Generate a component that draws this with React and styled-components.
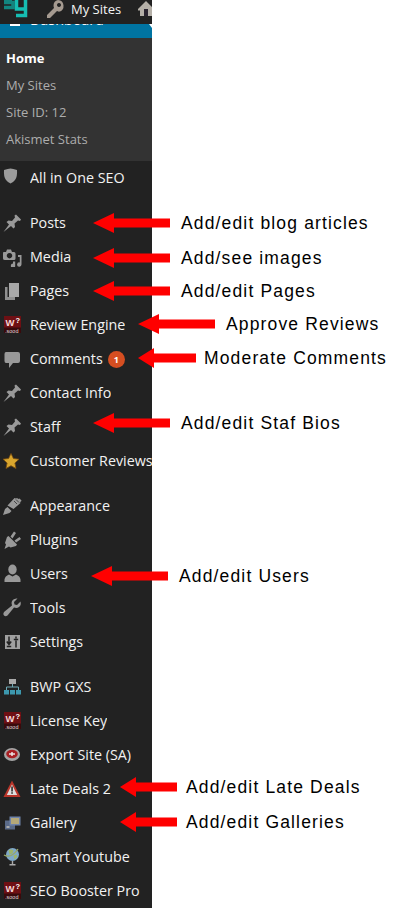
import React from "react";
import styled, { createGlobalStyle } from "styled-components";

const GlobalStyle = createGlobalStyle`
  html, body {
    margin: 0;
    padding: 0;
    background: #fff;
  }
`;

const Page = styled.div`
  width: 400px;
  height: 908px;
  overflow: hidden;
  background: #fff;
`;

const Sidebar = styled.aside`
  width: 152px;
  background: #222;
  font-family: "Open Sans", "Liberation Sans", sans-serif;
  font-size: 14.3px;
  color: #f2f2f2;
`;

/* top admin bar, cut off by the crop */
const TopBar = styled.header`
  position: relative;
  z-index: 1;
  display: flex;
  align-items: flex-start;
  width: 152px;
  height: 24px;
  overflow: hidden;
  background: #222;
`;

const Logo = styled.svg`
  flex: none;
  margin-left: 4px;
`;

const KeyIcon = styled.svg`
  flex: none;
  margin-left: 18px;
`;

const TopLabel = styled.span`
  flex: none;
  margin-left: 7px;
  font-size: 13px;
  line-height: 18px;
  color: #f4f4f4;
`;

const HomeIcon = styled.svg`
  flex: none;
  margin-left: 17px;
`;

/* current menu item, most of it hidden under the top bar */
const CurrentItem = styled.div`
  position: relative;
  display: flex;
  align-items: flex-start;
  height: 14px;
  overflow: hidden;
  background: #0074a2;
  color: #fff;
`;

const CurrentInner = styled.div`
  display: flex;
  align-items: center;
  flex: none;
  gap: 10px;
  width: 152px;
  height: 34px;
  margin-top: -22px;
  padding-left: 10px;
  box-sizing: border-box;
`;

const CurrentGlyph = styled.span`
  flex: none;
  width: 10px;
  height: 14px;
  background: #fff;
`;

const CurrentNotch = styled.span`
  position: absolute;
  top: 0;
  right: 0;
  width: 0;
  height: 0;
  border-top: 4px solid #fff;
  border-left: 3px solid transparent;
`;

const SubMenu = styled.ul`
  margin: 0;
  padding: 7px 0 8px 6px;
  list-style: none;
  background: #333;
  font-size: 13px;
`;

const SubItem = styled.li`
  height: 27px;
  line-height: 27px;
  color: ${(p) => (p.$active ? "#fff" : "#adadad")};
  font-weight: ${(p) => (p.$active ? 700 : 400)};
`;

const Group = styled.ul`
  margin: 0 0 11px;
  padding: 0;
  list-style: none;
  &:last-child {
    margin-bottom: 0;
  }
`;

const Row = styled.li`
  position: relative;
  display: flex;
  align-items: center;
  width: 152px;
  height: 34px;
  padding-left: 2px;
  box-sizing: border-box;
`;

const IconBox = styled.svg`
  flex: none;
  width: 20px;
  height: 20px;
  margin-right: 8px;
`;

const Label = styled.span`
  min-width: 0;
  padding-bottom: 2px;
  overflow: hidden;
  white-space: nowrap;
`;

const Badge = styled.span`
  flex: none;
  width: 17px;
  height: 17px;
  margin-left: 5px;
  border-radius: 50%;
  background: #d54e21;
  color: #fff;
  font-size: 9px;
  font-weight: 700;
  line-height: 17px;
  text-align: center;
`;

/* red arrow + caption drawn over the screenshot */
const Note = styled.div`
  position: absolute;
  top: ${(p) => p.$dy}px;
  left: ${(p) => p.$tip}px;
  display: flex;
  align-items: center;
  height: 34px;
  white-space: nowrap;
`;

const NoteArrow = styled.svg`
  flex: none;
  display: block;
`;

const NoteText = styled.span`
  margin-left: ${(p) => p.$gap}px;
  font-family: "Liberation Sans", Arial, sans-serif;
  font-size: 17.5px;
  letter-spacing: 1.15px;
  color: #000;
`;

const grey = "#999";

const Pin = () => (
  <IconBox viewBox="0 0 20 20">
    <path fill={grey} d="M1.500 19 7 11.500 4.500 9 6.500 7.500 10 8 13 4.500 12.500 2.500 14 1.500 19 6.500 18 8 16 7.500 12.500 10.500 13 14 11.500 15.500 9 13Z" />
  </IconBox>
);

const Media = () => (
  <IconBox viewBox="0 0 20 20">
    <path fill={grey} fillRule="evenodd" d="M1.500 5H4l1-2.500h4L10 5h2q1.500 0 1.500 1.500v5q0 1.500-1.500 1.500H3q-2 0-2-1.500v-5Q1 5 1.500 5ZM7.500 6a2.700 2.700 0 1 0 .01 0Z" />
    <path fill={grey} d="M16 8h3.500v9.500a2.200 2.200 0 1 1-1.700-2.100V10H16ZM11 14.500h2.200v4a2.200 2.200 0 1 1-2.200-2Z" />
  </IconBox>
);

const Pages = () => (
  <IconBox viewBox="0 0 20 20">
    <path fill="#8f8f8f" d="M3 6h2.500v10H13v3H3Z" />
    <path fill="#a8a8a8" d="M7 2h10v14H7Z" />
  </IconBox>
);

const WpBox = () => (
  <IconBox viewBox="0 0 20 20">
    <rect x="2" y="1" width="17" height="17" fill="#6e1014" />
    <rect x="2" y="12.500" width="17" height="5.500" fill="#3a0a0c" />
    <text x="3.500" y="10.500" fontFamily="Liberation Sans, sans-serif" fontWeight="700" fontSize="9.500" fill="#f4d6d6">W</text>
    <text x="13.500" y="8" fontFamily="Liberation Sans, sans-serif" fontWeight="700" fontSize="7.500" fill="#fff">?</text>
    <text x="3" y="17.500" fontFamily="Liberation Sans, sans-serif" fontSize="5.500" fill="#ddd">.sood</text>
  </IconBox>
);

const Comment = () => (
  <IconBox viewBox="0 0 20 20">
    <path fill={grey} d="M4 3h12q2 0 2 2v7q0 2-2 2h-5l-4 5v-5H4q-1.500 0-1.500-2V5Q2.500 3 4 3Z" />
  </IconBox>
);

const Star = () => (
  <IconBox viewBox="0 0 20 20">
    <path fill="#d9a62e" stroke="#7a4e10" strokeWidth=".8" d="m9 2.500 2.400 5 5.600.700-4.100 3.800 1.100 5.500-5-2.800-5 2.800 1.100-5.500L1 8.200l5.600-.700Z" />
  </IconBox>
);

const Brush = () => (
  <IconBox viewBox="0 0 20 20">
    <path fill={grey} d="M1 19 3 13l2.500-2 4 4-2 2Z" />
    <path fill={grey} d="m5.500 9.500 7-7.500 1.500.500 1-.500 1.500 1 1-.500 2 2-.500 1-1 .500.500 1-7 6Z" />
    <path fill="none" stroke="#222" strokeWidth=".7" d="m12 5 3 3M14 3.500l3 3" />
  </IconBox>
);

const Plug = () => (
  <IconBox viewBox="0 0 20 20">
    <path fill={grey} d="M2.500 19 4 14.500 3 13l2-6 1.500-1L15 14.500l-1 1.500-5.500 1.500-1.500-1Z" />
    <path fill={grey} d="M8.500 6.500 12 1.500l2 1.500-3.500 5.500ZM12.500 10.500 17.500 7l1.500 2-5 3.500Z" />
  </IconBox>
);

const User = () => (
  <IconBox viewBox="0 0 20 20">
    <ellipse cx="10.500" cy="5.500" rx="4.200" ry="5" fill={grey} />
    <path fill={grey} d="M2.500 18v-2.500Q3 12 7 10.500l3.500 2 3.500-2q4 1.500 4.500 5V18Z" />
  </IconBox>
);

const Wrench = () => (
  <IconBox viewBox="0 0 20 20">
    <path fill={grey} d="M18.500 3.500 15 7l-2.500-.5L12 4l3.500-3.500Q11.500 0 10 3q-1 2 0 4.500L2 14q-1.500 2 0 3.500t3.500 0L12 9.500q3 1 5-.5 2.500-2 1.500-5.500Z" />
  </IconBox>
);

const Settings = () => (
  <IconBox viewBox="0 0 20 20">
    <rect x="3" y="3" width="15" height="14" fill="#a0a0a0" />
    <path fill="none" stroke="#222" strokeWidth="1.500" d="M7 4.500v7M4.800 9.500 7 12.500l2.200-3M14 15.500v-7M11.800 7.500h4.400M4.800 14.500h4.400M14 4.500v2" />
  </IconBox>
);

const Network = () => (
  <IconBox viewBox="0 0 20 20">
    <rect x="7" y="2" width="7" height="5" fill="#aaa" />
    <path fill="none" stroke="#6fa9b5" d="M10.500 7v3M4.500 13v-3h12v3" />
    <path fill="#3d98ae" d="M2 13h5v4.500H2ZM8 13h5v4.500H8ZM14 13h5v4.500h-5Z" />
  </IconBox>
);

const ExportDisc = () => (
  <IconBox viewBox="0 0 20 20">
    <ellipse cx="10" cy="9.500" rx="8" ry="6.500" fill="#a5a5a5" />
    <ellipse cx="10" cy="9" rx="5.800" ry="4.200" fill="#a82024" />
    <path fill="#eee" d="M7 8.300h6v1.400H7Z" />
    <path fill="#eee" d="M9.300 7h1.400v4H9.300Z" />
  </IconBox>
);

const Warning = () => (
  <IconBox viewBox="0 0 20 20">
    <path fill="#b8352a" d="M10 1.500 18.500 18h-17Z" />
    <path fill="#ddd" d="M10 5.500 15.200 16H4.800Z" />
    <path fill="#222" d="M9.300 7.500h1.500v5H9.300ZM9.300 13.200h1.500v1.600H9.300Z" />
  </IconBox>
);

const Gallery = () => (
  <IconBox viewBox="0 0 20 20">
    <rect x="3" y="7.500" width="10" height="9" fill="#5a6a88" />
    <rect x="7.500" y="3.500" width="11" height="9" fill="#6f83aa" />
    <rect x="9" y="5" width="8" height="6" fill="#b5a878" />
    <rect x="4.500" y="13" width="3" height="2" fill="#aaa" />
  </IconBox>
);

const Globe = () => (
  <IconBox viewBox="0 0 20 20">
    <circle cx="10.500" cy="7.500" r="6.500" fill="#7fa9c9" />
    <path fill="#9db46a" d="M6.500 3.500q3-2 5 0l-1 3-3 1Zm5 5 3-1 1 2-3 3Z" />
    <path fill="none" stroke="#9aa860" strokeWidth="1.300" d="M2 8q7 4 14-6" />
    <path fill="#aaa" d="M9.800 14h1.400v3H9.800ZM7.500 17h6v1.500h-6Z" />
  </IconBox>
);

const Shield = () => (
  <IconBox viewBox="0 0 20 20">
    <path fill="#9c9c9c" d="M2 2q4-1.500 6.500-1.500T15 2q.5 7-2 10-2 2.500-4.500 3.500Q6 14.500 4 12 1.500 9 2 2Z" />
  </IconBox>
);

const Arrow = ({ width, head, band = 9 }) => (
  <NoteArrow width={width} height="20" viewBox={`0 0 ${width} 20`}>
    <polygon
      fill="#ff0000"
      points={`0,10 ${head},0 ${head},${10 - band / 2} ${width},${10 - band / 2} ${width},${10 + band / 2} ${head},${10 + band / 2} ${head},20`}
    />
  </NoteArrow>
);

const MenuRow = ({ icon: Icon, label, badge, note }) => (
  <Row>
    <Icon />
    <Label>{label}</Label>
    {badge && <Badge>{badge}</Badge>}
    {note && (
      <Note $tip={note.tip} $dy={note.dy}>
        <Arrow width={note.end - note.tip} head={note.head} />
        <NoteText $gap={note.text - note.end}>{note.caption}</NoteText>
      </Note>
    )}
  </Row>
);

const groups = [
  [{ icon: Shield, label: "All in One SEO" }],
  [
    { icon: Pin, label: "Posts", note: { tip: 93, end: 170, head: 21, text: 181, dy: 0, caption: "Add/edit blog articles" } },
    { icon: Media, label: "Media", note: { tip: 93, end: 170, head: 21, text: 181, dy: 1, caption: "Add/see images" } },
    { icon: Pages, label: "Pages", note: { tip: 93, end: 170, head: 21, text: 181, dy: 0, caption: "Add/edit Pages" } },
    { icon: WpBox, label: "Review Engine", note: { tip: 138, end: 215, head: 21, text: 226, dy: -1, caption: "Approve Reviews" } },
    { icon: Comment, label: "Comments", badge: "1", note: { tip: 138, end: 196, head: 16, text: 204, dy: -1, caption: "Moderate Comments" } },
    { icon: Pin, label: "Contact Info" },
    { icon: Pin, label: "Staff", note: { tip: 93, end: 170, head: 21, text: 181, dy: -4, caption: "Add/edit Staf Bios" } },
    { icon: Star, label: "Customer Reviews" },
  ],
  [
    { icon: Brush, label: "Appearance" },
    { icon: Plug, label: "Plugins" },
    { icon: User, label: "Users", note: { tip: 91, end: 168, head: 21, text: 179, dy: 2, caption: "Add/edit Users" } },
    { icon: Wrench, label: "Tools" },
    { icon: Settings, label: "Settings" },
  ],
  [
    { icon: Network, label: "BWP GXS" },
    { icon: WpBox, label: "License Key" },
    { icon: ExportDisc, label: "Export Site (SA)" },
    { icon: Warning, label: "Late Deals 2", note: { tip: 120, end: 177, head: 16, text: 186, dy: -2, caption: "Add/edit Late Deals" } },
    { icon: Gallery, label: "Gallery", note: { tip: 120, end: 177, head: 16, text: 186, dy: -1, caption: "Add/edit Galleries" } },
    { icon: Globe, label: "Smart Youtube" },
    { icon: WpBox, label: "SEO Booster Pro" },
  ],
];

export default function App() {
  return (
    <>
      <GlobalStyle />
      <Page>
        <Sidebar>
          <TopBar>
            <Logo width="24" height="18" viewBox="0 0 24 18">
              <path fill="none" stroke="#12857f" strokeWidth="3.500" d="M0 1.500h8M1 -1v3.500h8v5H0" />
              <path fill="none" stroke="#16bdb2" strokeWidth="3.500" d="M21.500 -2v17.500H12M21.500 9H12.500V-2" />
            </Logo>
            <KeyIcon width="18" height="18" viewBox="0 0 18 18">
              <path fill="#a59a90" fillRule="evenodd" d="M12 0a6 6 0 0 1 1 11.800l-2-.800L4 18H1v-3l7-7-.500-2A6 6 0 0 1 12 0Zm1 3a2 2 0 1 0 .01 0Z" />
            </KeyIcon>
            <TopLabel>My Sites</TopLabel>
            <HomeIcon width="16" height="20" viewBox="0 0 16 20">
              <path fill="#b5b0a8" d="M0 9 8 1l8 8v1.500H14V16H2v-5.500H0Z" />
              <rect x="6" y="9" width="4" height="7" fill="#2a2430" />
            </HomeIcon>
          </TopBar>
          <CurrentItem>
            <CurrentInner>
              <CurrentGlyph />
              <span>Dashboard</span>
            </CurrentInner>
            <CurrentNotch />
          </CurrentItem>
          <SubMenu>
            <SubItem $active>Home</SubItem>
            <SubItem>My Sites</SubItem>
            <SubItem>Site ID: 12</SubItem>
            <SubItem>Akismet Stats</SubItem>
          </SubMenu>
          {groups.map((items, i) => (
            <Group key={i}>
              {items.map((item) => (
                <MenuRow key={item.label} {...item} />
              ))}
            </Group>
          ))}
        </Sidebar>
      </Page>
    </>
  );
}
